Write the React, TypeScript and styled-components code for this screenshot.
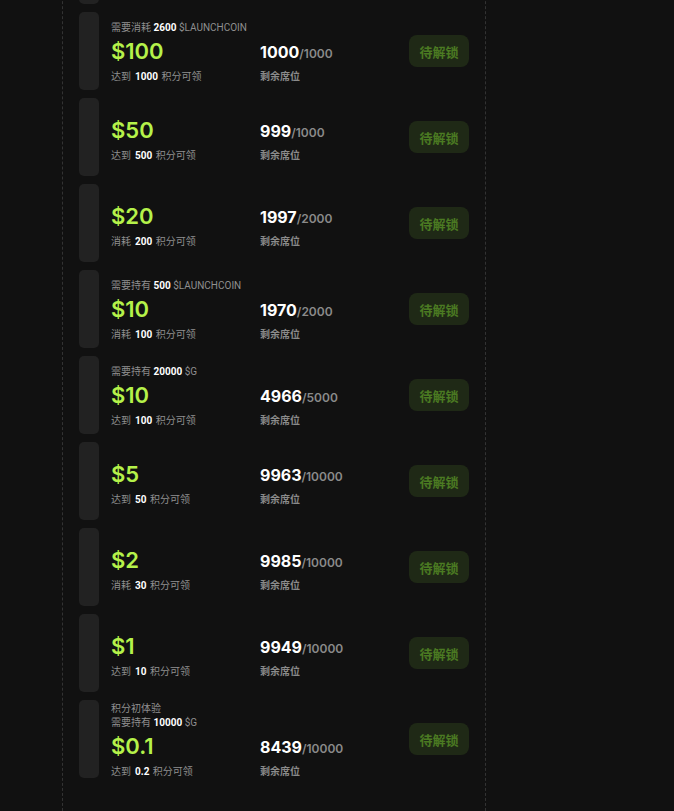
import React from "react";
import styled, { createGlobalStyle } from "styled-components";

const Global = createGlobalStyle`
  html, body { margin: 0; padding: 0; background: #111111; }
  body { font-family: Inter, "Noto Sans CJK SC", sans-serif; color: #fff; overflow: hidden; }
`;

const Page = styled.div`
  width: 674px;
  height: 811px;
  overflow: hidden;
  background: #111111;
`;

const Column = styled.div`
  margin-left: 62px;
  width: 424px;
  min-height: 900px;
  border-left: 1px dashed #333;
  border-right: 1px dashed #333;
  box-sizing: border-box;
  padding: 0 16px;
  margin-top: -74px;
  display: flex;
  flex-direction: column;
  gap: 8px;
`;

const Row = styled.div`
  height: 78px;
  display: flex;
  align-items: center;
`;

const Bar = styled.div`
  width: 20px;
  align-self: stretch;
  background: #222222;
  border-radius: 5px;
  flex-shrink: 0;
`;

const Info = styled.div`
  margin-left: 12px;
  display: flex;
  align-items: flex-end;
  flex: 1;
  padding-top: 2px;
`;

const Reward = styled.div`
  width: 149px;
  display: flex;
  flex-direction: column;
`;

const Small = styled.div`
  font-family: Roboto, "Noto Sans CJK SC", sans-serif;
  font-size: 10px;
  line-height: 14px;
  color: #8f8f8f;
  white-space: nowrap;
`;

const Hi = styled.span<{ $gap?: boolean }>`
  color: #fff;
  font-weight: 700;
  margin: ${(p) => (p.$gap ? "0 1px 0 4px" : "0")};
`;

const Price = styled.div`
  font-size: 22px;
  line-height: 28px;
  font-weight: 600;
  color: #b5f24a;
  margin: 2px 0 5px;
`;

const Seats = styled.div`
  display: flex;
  flex-direction: column;
`;

const SeatNum = styled.div`
  line-height: 28px;
  margin-bottom: 2px;
  white-space: nowrap;
`;

const Big = styled.span`
  font-size: 16px;
  font-weight: 700;
  color: #fff;
`;

const Total = styled.span`
  font-size: 12px;
  font-weight: 600;
  color: #8a8a8a;
`;

const SeatLabel = styled(Small)`
  font-weight: 700;
  color: #8a8a8a;
`;

const Button = styled.div`
  width: 60px;
  height: 32px;
  border-radius: 8px;
  background: #1f2916;
  color: #4b7a22;
  font-size: 13px;
  font-weight: 700;
  display: flex;
  align-items: center;
  justify-content: center;
  flex-shrink: 0;
`;

type Item = {
  extra?: string;
  req?: { pre: string; num: string; unit: string };
  price: string;
  verb: string;
  pts: string;
  left: string;
  total: string;
};

const items: Item[] = [
  { req: { pre: "需要消耗", num: "2600", unit: "$LAUNCHCOIN" }, price: "$100", verb: "达到", pts: "1000", left: "1000", total: "1000" },
  { price: "$50", verb: "达到", pts: "500", left: "999", total: "1000" },
  { price: "$20", verb: "消耗", pts: "200", left: "1997", total: "2000" },
  { req: { pre: "需要持有", num: "500", unit: "$LAUNCHCOIN" }, price: "$10", verb: "消耗", pts: "100", left: "1970", total: "2000" },
  { req: { pre: "需要持有", num: "20000", unit: "$G" }, price: "$10", verb: "达到", pts: "100", left: "4966", total: "5000" },
  { price: "$5", verb: "达到", pts: "50", left: "9963", total: "10000" },
  { price: "$2", verb: "消耗", pts: "30", left: "9985", total: "10000" },
  { price: "$1", verb: "达到", pts: "10", left: "9949", total: "10000" },
  { extra: "积分初体验", req: { pre: "需要持有", num: "10000", unit: "$G" }, price: "$0.1", verb: "达到", pts: "0.2", left: "8439", total: "10000" },
];

export default function App() {
  return (
    <Page>
      <Global />
      <Column>
        <Row>
          <Bar />
        </Row>
        {items.map((it, i) => (
          <Row key={i}>
            <Bar />
            <Info>
              <Reward>
                {it.extra && <Small>{it.extra}</Small>}
                {it.req && (
                  <Small>
                    {it.req.pre} <Hi>{it.req.num}</Hi> {it.req.unit}
                  </Small>
                )}
                <Price>{it.price}</Price>
                <Small>
                  {it.verb}
                  <Hi $gap>{it.pts}</Hi> 积分可领
                </Small>
              </Reward>
              <Seats>
                <SeatNum>
                  <Big>{it.left}</Big>
                  <Total>/{it.total}</Total>
                </SeatNum>
                <SeatLabel>剩余席位</SeatLabel>
              </Seats>
            </Info>
            <Button>待解锁</Button>
          </Row>
        ))}
      </Column>
    </Page>
  );
}
